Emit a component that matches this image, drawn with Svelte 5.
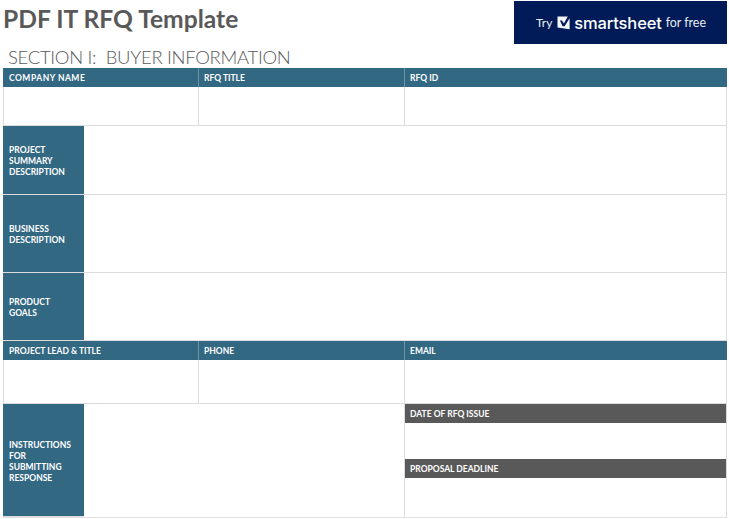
<script>
  const lead = [
    { cls: 'c1 wider', text: 'COMPANY NAME' },
    { cls: 'c2', text: 'RFQ TITLE' },
    { cls: 'c3', text: 'RFQ ID' }
  ];
  const contact = [
    { cls: 'c1', text: 'PROJECT LEAD & TITLE' },
    { cls: 'c2', text: 'PHONE' },
    { cls: 'c3', text: 'EMAIL' }
  ];
  const blocks = [
    { lines: ['PROJECT', 'SUMMARY', 'DESCRIPTION'] },
    { lines: ['BUSINESS', 'DESCRIPTION'] },
    { lines: ['PRODUCT', 'GOALS'] }
  ];
</script>

<div class="page">
  <header class="top">
    <h1>PDF IT RFQ Template</h1>
    <div class="promo">
      <span class="try">Try</span>
      <svg class="check" viewBox="0 0 14 15" width="14" height="15" aria-hidden="true">
        <path d="M0.5 1.5 L10.8 1.5 L6.9 8.6 L4.9 5.4 L2.9 5.4 L5.6 11.2 L7.6 11.2 L12.6 3.2 L12.6 14.2 L0.5 12.6 Z" fill="#f4f6fa" />
      </svg>
      <span class="brand">smartsheet</span>
      <span class="free">for free</span>
    </div>
  </header>

  <h2>SECTION I:&nbsp; BUYER INFORMATION</h2>

  <div class="table">
    {#each lead as h}
      <div class="head {h.cls}">{h.text}</div>
    {/each}
    <div class="cell c1"></div>
    <div class="cell c2"></div>
    <div class="cell c3"></div>

    {#each blocks as b}
      <div class="side">{#each b.lines as l}<span>{l}</span>{/each}</div>
      <div class="cell wide"></div>
    {/each}

    {#each contact as h}
      <div class="head {h.cls}">{h.text}</div>
    {/each}
    <div class="cell c1"></div>
    <div class="cell c2"></div>
    <div class="cell c3"></div>

    <div class="side tall">
      <span>INSTRUCTIONS</span><span>FOR</span><span>SUBMITTING</span><span>RESPONSE</span>
    </div>
    <div class="cell mid"></div>
    <div class="dates">
      <div class="grey">DATE OF RFQ ISSUE</div>
      <div class="blank"></div>
      <div class="grey">PROPOSAL DEADLINE</div>
      <div class="blank"></div>
    </div>
  </div>
</div>

<style>
  :global(body) {
    margin: 0;
    background: #fff;
  }
  .page {
    width: 729px;
    height: 519px;
    box-sizing: border-box;
    padding: 1px 2px 0 3px;
    font-family: Lato, "Open Sans", sans-serif;
    overflow: hidden;
  }
  .top {
    display: flex;
    justify-content: space-between;
    align-items: flex-start;
    height: 43px;
  }
  h1 {
    margin: 0;
    font-size: 24.6px;
    line-height: 35px;
    font-weight: 700;
    color: #595959;
  }
  .promo {
    width: 213px;
    height: 43px;
    margin-left: auto;
    background: #011b58;
    color: #e8ebf2;
    display: flex;
    align-items: center;
    box-sizing: border-box;
    padding-left: 22px;
  }
  .try {
    font-size: 12px;
    margin-right: 5px;
  }
  .check {
    margin-right: 3px;
  }
  .brand {
    font-family: Inter, Lato, sans-serif;
    font-size: 16.5px;
    font-weight: 500;
    color: #fff;
    margin-right: 4px;
    letter-spacing: -0.15px;
  }
  .free {
    font-size: 12.4px;
  }
  h2 {
    margin: 0;
    padding-left: 5px;
    height: 24px;
    font-size: 18.5px;
    line-height: 26px;
    font-weight: 300;
    letter-spacing: -0.3px;
    color: #595959;
    white-space: nowrap;
  }
  .table {
    display: grid;
    grid-template-columns: 81px 114px 206px 323px;
    grid-template-rows: 19px 39px 69px 78px 68px 19px 44px 113px;
    border-bottom: 1px solid #e0e0e0;
    width: 724px;
  }
  .c1 {
    grid-column: 1 / 3;
  }
  .c2 {
    grid-column: 3;
  }
  .c3 {
    grid-column: 4;
  }
  .head {
    box-sizing: border-box;
    background: #336883;
    color: #fff;
    font-size: 8.5px;
    font-weight: 700;
    line-height: 21px;
    padding-left: 6px;
  }
  .head.c2,
  .head.c3 {
    border-left: 1px solid #6d93a7;
    padding-left: 5px;
  }
  .wider {
    letter-spacing: 0.5px;
  }
  .cell {
    box-sizing: border-box;
    border-bottom: 1px solid #dcdcdc;
  }
  .cell.c1,
  .cell.c2,
  .cell.c3 {
    border-left: 1px solid #dcdcdc;
  }
  .cell.c3,
  .wide {
    border-right: 1px solid #dcdcdc;
  }
  .wide {
    grid-column: 2 / 5;
  }
  .mid {
    grid-column: 2 / 4;
    border-bottom: none;
  }
  .side {
    grid-column: 1;
    background: #336883;
    color: #fff;
    font-size: 8.5px;
    font-weight: 700;
    line-height: 11px;
    padding-left: 6px;
    padding-top: 2px;
    display: flex;
    flex-direction: column;
    justify-content: center;
    border-bottom: 1px solid #dcdcdc;
  }
  .tall {
    padding-top: 4px;
  }
  .dates {
    grid-column: 4;
    display: grid;
    grid-template-rows: 19px 36px 19px 39px;
    border-left: 1px solid #dcdcdc;
    border-right: 1px solid #dcdcdc;
  }
  .grey {
    background: #595959;
    color: #fff;
    font-size: 8.5px;
    font-weight: 700;
    line-height: 21px;
    padding-left: 5px;
  }
</style>
